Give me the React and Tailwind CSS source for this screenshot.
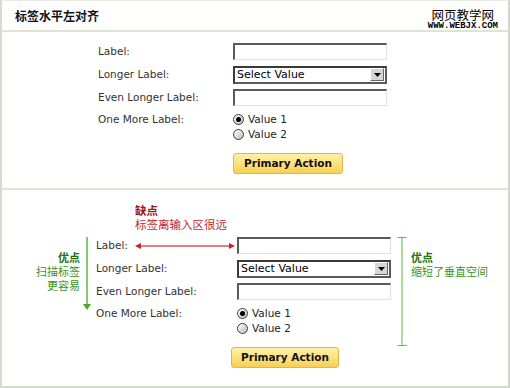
import React from "react"

const en = "font-['DejaVu_Sans',Verdana,sans-serif]"
const cjk = "font-['Noto_Sans_CJK_SC','Noto_Sans',sans-serif]"

function TextInput() {
  return (
    <div className="h-[17px] w-[154px] bg-white border-t-2 border-l-2 border-r border-b border-t-[#5a5a5a] border-l-[#5a5a5a] border-r-[#e2e2e2] border-b-[#e2e2e2]" />
  )
}

function SelectBox() {
  return (
    <div className="h-[18px] w-[154px] bg-white border-2 border-t-[#3a3a3a] border-l-[#3a3a3a] border-r-[#5a5a5a] border-b-[#5a5a5a] flex items-center justify-between pl-[2px] pr-[1px]">
      <span className={`${en} text-[11px] text-black leading-none`}>Select Value</span>
      <div className="h-[13px] w-[14px] bg-[#d6d6d6] border border-t-white border-l-white border-r-[#666] border-b-[#666] flex items-center justify-center">
        <svg width="7" height="4" viewBox="0 0 7 4">
          <polygon points="0,0 7,0 3.5,4" fill="#000" />
        </svg>
      </div>
    </div>
  )
}

function Radio({ checked, label }) {
  return (
    <div className="flex items-center h-[15px] gap-[4px]">
      <div className="w-[11px] h-[11px] rounded-full border border-[#3d3d3d] bg-gradient-to-br from-white to-[#bcbcbc] flex items-center justify-center">
        {checked && <div className="w-[5px] h-[5px] rounded-full bg-black" />}
      </div>
      <span className={`${en} text-[10.5px] text-[#222] leading-[15px]`}>{label}</span>
    </div>
  )
}

function PrimaryButton({ w }) {
  return (
    <div className={`${w} h-[21px] rounded-[3px] border border-[#e3b547] bg-gradient-to-b from-[#fff0a8] via-[#fde27e] to-[#f7cf52] flex items-center justify-center`}>
      <span className={`${en} text-[10.5px] font-bold text-[#111]`}>Primary Action</span>
    </div>
  )
}

function Row({ label, labelW, children }) {
  return (
    <div className="flex items-center h-[17px]">
      <span className={`${en} ${labelW} text-[10.5px] text-[#333] shrink-0`}>{label}</span>
      {children}
    </div>
  )
}

function Form({ labelW, btnW }) {
  return (
    <div className="flex flex-col">
      <div className="flex flex-col gap-[6px]">
        <Row label="Label:" labelW={labelW}><TextInput /></Row>
        <Row label="Longer Label:" labelW={labelW}><SelectBox /></Row>
        <Row label="Even Longer Label:" labelW={labelW}><TextInput /></Row>
        <div className="flex items-start">
          <span className={`${en} ${labelW} text-[10.5px] text-[#333] shrink-0 leading-[15px]`}>One More Label:</span>
          <div className="flex flex-col">
            <Radio checked label="Value 1" />
            <Radio label="Value 2" />
          </div>
        </div>
      </div>
      <div className="flex mt-[11px] ml-[135px]">
        <PrimaryButton w={btnW} />
      </div>
    </div>
  )
}

export default function App() {
  return (
    <div className="w-[510px] h-[388px] bg-white border-t border-t-[#e8ece2] border-l-2 border-l-[#d6dccc] border-r-2 border-r-[#d2d6cc] border-b-2 border-b-[#d6dccc] flex flex-col overflow-hidden">
      <div className="h-[29px] flex items-center justify-between pl-[13px] pr-[9px]">
        <span className={`${cjk} text-[12px] font-bold text-[#111]`}>标签水平左对齐</span>
        <div className="flex flex-col items-end mt-[7px]">
          <span className={`${cjk} text-[12.5px] text-black leading-[15px] pr-[5px]`}>网页教学网</span>
          <span className="font-['Liberation_Mono',monospace] font-bold text-[9px] leading-[9px] text-black bg-white px-[1px]">WWW.WEBJX.COM</span>
        </div>
      </div>
      <div className="h-[2px] bg-[#dde4d3]" />
      <div className="h-[156px] pt-[11px] pl-[96px]">
        <Form labelW="w-[135px]" btnW="w-[110px]" />
      </div>
      <div className="h-[2px] bg-[#dde4d3]" />
      <div className="flex-1 relative pl-[94px]">
        <div className={`${cjk} ml-[39px] mt-[13px] flex flex-col`}>
          <span className="text-[11.5px] font-bold text-[#a1141c] leading-[14px]">缺点</span>
          <span className="text-[11.5px] text-[#c0282f] leading-[14px]">标签离输入区很远</span>
        </div>
        <div className="mt-[6px]">
          <Form labelW="w-[141px]" btnW="w-[108px]" />
        </div>

        {/* red double arrow */}
        <svg className="absolute left-[133px] top-[52px]" width="100" height="8" viewBox="0 0 100 8">
          <line x1="3" y1="4" x2="97" y2="4" stroke="#d2545a" strokeWidth="1.5" />
          <polygon points="0,4 6,1 6,7" fill="#c0282f" />
          <polygon points="100,4 94,1 94,7" fill="#c0282f" />
        </svg>

        {/* left annotation */}
        <div className={`${cjk} absolute left-[24px] top-[60px] flex flex-col items-end w-[54px]`}>
          <span className="text-[11px] font-bold text-[#24700f] leading-[14px]">优点</span>
          <span className="text-[11px] text-[#3c931c] leading-[14px]">扫描标签</span>
          <span className="text-[11px] text-[#3c931c] leading-[14px]">更容易</span>
        </div>
        <svg className="absolute left-[81px] top-[47px]" width="8" height="74" viewBox="0 0 8 74">
          <line x1="4" y1="0" x2="4" y2="68" stroke="#5cb83c" strokeWidth="1.5" />
          <polygon points="0,67 8,67 4,73" fill="#4caa2c" />
        </svg>

        {/* right bracket */}
        <svg className="absolute left-[394px] top-[47px]" width="12" height="109" viewBox="0 0 12 109">
          <line x1="6" y1="0.5" x2="6" y2="108.5" stroke="#5cb83c" strokeWidth="1" />
          <line x1="1.5" y1="0.5" x2="10.5" y2="0.5" stroke="#5cb83c" strokeWidth="1" />
          <line x1="1.5" y1="108.5" x2="10.5" y2="108.5" stroke="#5cb83c" strokeWidth="1" />
        </svg>
        <div className={`${cjk} absolute left-[409px] top-[60px] flex flex-col`}>
          <span className="text-[11px] font-bold text-[#24700f] leading-[14px]">优点</span>
          <span className="text-[11px] text-[#3c931c] leading-[14px]">缩短了垂直空间</span>
        </div>
      </div>
    </div>
  )
}
